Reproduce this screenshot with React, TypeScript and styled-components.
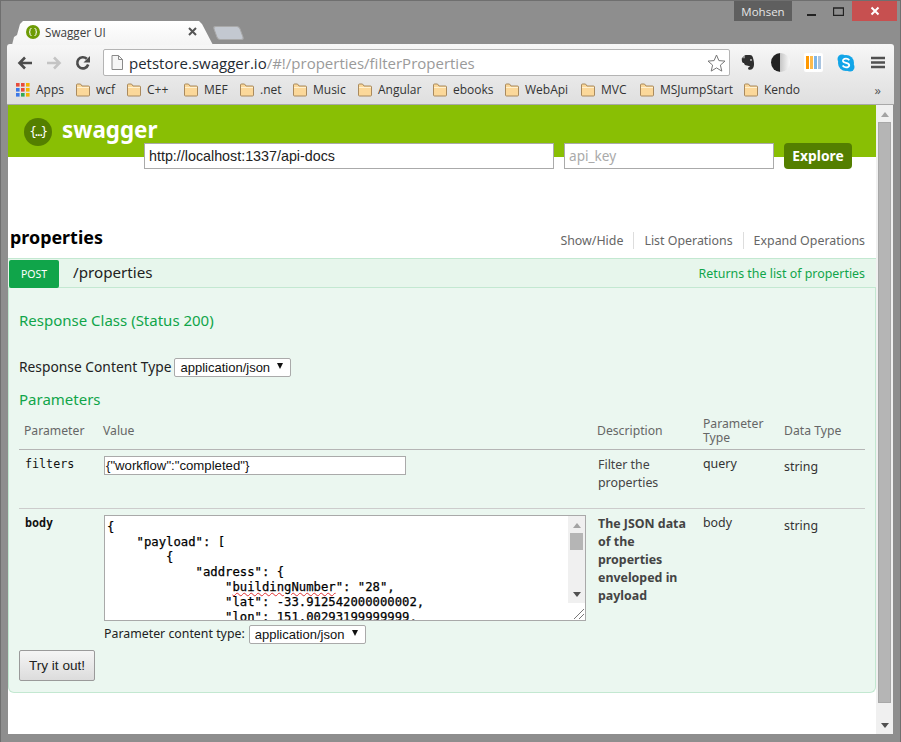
import React from 'react';
import styled, { createGlobalStyle } from 'styled-components';

const GlobalStyle = createGlobalStyle`
  html, body { margin: 0; padding: 0; overflow: hidden; background: #8f8f8f; }
  * { box-sizing: border-box; }
`;

const UI_FONT = `"Open Sans", "Noto Sans", sans-serif`;
const PAGE_FONT = `"Noto Sans", "Open Sans", sans-serif`;
const ARIAL = `"Liberation Sans", Arial, sans-serif`;
const MONO = `"DejaVu Sans Mono", "Liberation Mono", monospace`;

const Frame = styled.div`
  width: 901px;
  height: 742px;
  display: flex;
  flex-direction: column;
  background: #8e8e8e;
  border: 1px solid #6f6f6f;
  border-bottom: 0;
  overflow: hidden;
`;

const TitleBar = styled.div`
  height: 43px;
  flex: none;
  display: flex;
  justify-content: space-between;
  padding: 0 3px 0 6px;
`;

const TabStrip = styled.div`
  display: flex;
  align-items: flex-end;
  padding: 0 0 0 5px;
`;

const Tab = styled.div`
  position: relative;
  z-index: 1;
  width: 201px;
  height: 24px;
  margin-bottom: -1px;
  padding: 0 16px 3px 14px;
  display: flex;
  align-items: center;
  gap: 5px;
  background: linear-gradient(#ffffff, #f4f4f4);
  clip-path: polygon(0 100%, 2px 16px, 5px 14px, 8px 3px, 11px 0, 187px 0, 190px 3px, 201px 100%);
  font: 11.7px ${UI_FONT};
  color: #3d3d3d;
`;

const TabTitle = styled.span`
  flex: 1;
`;

const NewTab = styled.div`
  width: 27px;
  height: 14px;
  margin: 0 0 4px 2px;
  background: #c3c8d0;
  border: 1px solid #a9a9a9;
  border-radius: 3px;
  transform: skewX(20deg);
`;

const WindowArea = styled.div`
  display: flex;
  align-items: flex-start;
`;

const Profile = styled.div`
  width: 58px;
  height: 20px;
  margin-right: 6px;
  background: #5f5f5f;
  color: #e6e6e6;
  font: 11.5px/21px ${UI_FONT};
  text-align: center;
`;

const WinButton = styled.div<{ $close?: boolean }>`
  width: ${p => (p.$close ? '45px' : '27px')};
  height: 20px;
  display: flex;
  align-items: center;
  justify-content: center;
  background: ${p => (p.$close ? '#c75050' : 'transparent')};
`;

const Chrome = styled.div`
  flex: none;
  margin: 0 6px;
  background: linear-gradient(#f7f7f7, #e8e8e8 58%, #dfdfdf);
  border-radius: 3px 3px 0 0;
  border-bottom: 1px solid #a8a8a8;
`;

const Toolbar = styled.div`
  height: 33px;
  display: flex;
  align-items: center;
  padding: 4px 0 0 10px;
`;

const NavIcon = styled.div`
  width: 29px;
  height: 20px;
  flex: none;
  display: flex;
  align-items: center;
`;

const Omnibox = styled.div`
  flex: none;
  width: 627px;
  height: 27px;
  margin-left: -1px;
  display: flex;
  align-items: center;
  gap: 6px;
  padding: 0 3px 0 7px;
  background: #fff;
  border: 1px solid #b4b4b4;
  border-radius: 2px;
  font: 15px ${UI_FONT};
  color: #9a9a9a;
  white-space: nowrap;
`;

const Host = styled.span`
  color: #1f2b33;
`;

const UrlText = styled.div`
  flex: 1;
`;

const Extensions = styled.div`
  flex: 1;
  display: flex;
  align-items: center;
  padding-left: 2px;
`;

const ExtensionSlot = styled.div`
  width: 32.5px;
  flex: none;
  display: flex;
  justify-content: center;
`;

const BookmarkBar = styled.div`
  height: 27px;
  display: flex;
  align-items: center;
  padding: 0 0 2px 9px;
  font: 12px ${UI_FONT};
  color: #333;
  white-space: nowrap;
`;

const Bookmark = styled.div<{ $width: number; $gap: number }>`
  width: ${p => p.$width}px;
  flex: none;
  display: flex;
  align-items: center;
  gap: ${p => p.$gap}px;
`;

const More = styled.span`
  margin-left: auto;
  margin-right: 13px;
  font-size: 13px;
  color: #555;
`;

const Viewport = styled.div`
  height: 629px;
  flex: none;
  margin: 0 7px;
  display: flex;
  background: #fff;
`;

const Page = styled.div`
  width: 868px;
  flex: none;
  overflow: hidden;
  font-family: ${PAGE_FONT};
`;

const Scrollbar = styled.div`
  flex: 1;
  background: #f0f0f0;
  display: flex;
  flex-direction: column;
  align-items: center;
  justify-content: space-between;
  padding: 7px 0 6px;
`;

const ScrollThumb = styled.div`
  width: 13px;
  flex: 1;
  margin: 5px 0 20px;
  background: #b5b5b5;
  border: 1px solid #a8a8a8;
`;

const Arrow = styled.div<{ $up?: boolean }>`
  width: 0;
  height: 0;
  flex: none;
  border-left: 4px solid transparent;
  border-right: 4px solid transparent;
  ${p => (p.$up ? 'border-bottom: 5px solid #a3a3a3;' : 'border-top: 5px solid #505050;')}
`;

const Header = styled.div`
  height: 52px;
  padding: 13px 0 0 16px;
  display: flex;
  align-items: flex-start;
  gap: 10px;
  background: #89bf04;
`;

const LogoMark = styled.div`
  width: 28px;
  height: 28px;
  display: flex;
  align-items: center;
  justify-content: center;
  border-radius: 50%;
  background: #547f00;
  color: #fff;
  font: 12px ${MONO};
  letter-spacing: -1.5px;
`;

const LogoText = styled.div`
  margin-top: -3px;
  font: bold 22.4px/30px ${PAGE_FONT};
  color: #fff;
`;

const ApiForm = styled.div`
  margin: -14px 0 0 136px;
  height: 26px;
  display: flex;
  gap: 10px;
`;

const ApiInput = styled.div<{ $width: number; $placeholder?: boolean }>`
  width: ${p => p.$width}px;
  height: 26px;
  padding: 0 4px;
  background: #fff;
  border: 1px solid #aaa;
  font: ${p => (p.$placeholder ? '13.6px' : '14.3px')}/24px ${p => (p.$placeholder ? PAGE_FONT : ARIAL)};
  color: ${p => (p.$placeholder ? '#aaa' : '#222')};
`;

const ExploreButton = styled.div`
  width: 68px;
  height: 26px;
  background: #547f00;
  border-radius: 4px;
  color: #fff;
  text-align: center;
  font: bold 13.8px/26px ${PAGE_FONT};
`;

const Section = styled.div`
  margin-top: 55px;
`;

const SectionHead = styled.div`
  height: 34px;
  display: flex;
  align-items: flex-start;
  justify-content: space-between;
  padding: 0 11px 0 2px;
`;

const SectionTitle = styled.div`
  font: bold 17.9px/26px ${PAGE_FONT};
  color: #000;
`;

const Links = styled.div`
  display: flex;
  margin-top: 8px;
  font: 12.4px/17px ${PAGE_FONT};
  color: #666;
`;

const LinkItem = styled.div<{ $first?: boolean }>`
  padding: 0 10px 0 ${p => (p.$first ? '0' : '10px')};
  border-left: ${p => (p.$first ? '0' : '1px solid #ddd')};
  &:last-child { padding-right: 0; }
`;

const OperationHead = styled.div`
  height: 30px;
  display: flex;
  align-items: center;
  padding: 1px 11px 0 1px;
  background: #e7f6ec;
  border: 1px solid #c3e8d1;
  border-left: 0;
  border-right: 0;
`;

const Verb = styled.div`
  width: 50px;
  height: 28px;
  background: #10a54a;
  border-radius: 2px;
  color: #fff;
  font: 10.5px/29px ${PAGE_FONT};
  text-align: center;
`;

const Path = styled.div`
  margin: -3px 0 0 14px;
  flex: 1;
  font: 15.2px ${PAGE_FONT};
  color: #222;
`;

const Summary = styled.div`
  font: 12.4px ${PAGE_FONT};
  color: #10a54a;
`;

const OperationBody = styled.div`
  height: 405px;
  padding: 22px 10px 0 10px;
  background: #ebf7f0;
  border: 1px solid #c3e8d1;
  border-top: 0;
  border-radius: 0 0 6px 6px;
  display: flex;
  flex-direction: column;
`;

const GreenHeading = styled.div<{ $top?: number; $gap?: number }>`
  font: 15px/20px ${PAGE_FONT};
  color: #10a54a;
  margin-top: ${p => p.$top || 0}px;
  margin-bottom: ${p => p.$gap || 0}px;
`;

const ContentTypeRow = styled.div<{ $gap: number; $size: number }>`
  display: flex;
  align-items: center;
  gap: ${p => p.$gap}px;
  height: 18px;
  font: ${p => p.$size}px/18px ${PAGE_FONT};
  color: #222;
`;

const FakeSelect = styled.div<{ $width: number }>`
  width: ${p => p.$width}px;
  height: 19px;
  padding: 0 5px;
  display: flex;
  align-items: center;
  justify-content: space-between;
  background: #fff;
  border: 1px solid #aaa;
  border-radius: 2px;
  font: 13px ${ARIAL};
  color: #111;
`;

const SelectCaret = styled.span`
  width: 0;
  height: 0;
  margin-top: -2px;
  margin-right: 2px;
  border-left: 3.5px solid transparent;
  border-right: 3.5px solid transparent;
  border-top: 6px solid #111;
`;

const Grid = `
  display: grid;
  grid-template-columns: 79px 494px 106px 81px 1fr;
`;

const ParamHead = styled.div`
  ${Grid}
  height: 33px;
  margin-top: 8px;
  align-items: center;
  padding: 0 0 5px 5px;
  border-bottom: 1px solid #b5b5b5;
  font: 12.2px/14px ${PAGE_FONT};
  color: #666;
`;

const ParamRow = styled.div<{ $height: number; $border?: boolean }>`
  ${Grid}
  height: ${p => p.$height}px;
  padding-left: 5px;
  align-items: start;
  border-bottom: ${p => (p.$border ? '1px solid #ccc' : '0')};
`;

const ParamName = styled.div<{ $strong?: boolean }>`
  padding: 7px 0 0 1px;
  font: ${p => (p.$strong ? 'bold' : 'normal')} 11.7px/14px ${MONO};
  color: #111;
`;

const ValueCell = styled.div`
  padding: 6px 0 0 1px;
`;

const ValueInput = styled.div`
  width: 302px;
  height: 19px;
  padding-left: 1px;
  background: #fff;
  border: 1px solid #aaa;
  font: 13.2px/17px ${ARIAL};
  color: #111;
  white-space: nowrap;
`;

const Editor = styled.div`
  position: relative;
  width: 482px;
  height: 106px;
  background: #fff;
  border: 1px solid #a9a9a9;
  overflow: hidden;
`;

const EditorText = styled.pre`
  margin: 0;
  padding: 4px 0 0 2px;
  font: normal 12.25px/15px ${MONO};
  color: #000;
  -webkit-text-stroke: 0.25px #000;
`;

const Squiggle = styled.span`
  text-decoration: underline wavy #e03030 1px;
  text-underline-offset: 1px;
`;

const EditorScroll = styled.div`
  position: absolute;
  top: 0;
  right: 0;
  bottom: 17px;
  width: 17px;
  padding: 7px 0 6px;
  display: flex;
  flex-direction: column;
  align-items: center;
  justify-content: space-between;
  background: #f0f0f0;
`;

const EditorThumb = styled.div`
  position: absolute;
  top: 17px;
  left: 2px;
  width: 13px;
  height: 17px;
  background: #b5b5b5;
`;

const ResizeGrip = styled.svg`
  position: absolute;
  right: 0;
  bottom: 0;
`;

const EditorFooter = styled.div`
  margin-top: 4px;
`;

const Description = styled.div<{ $bold?: boolean }>`
  padding: 6px 15px 0 1px;
  font: ${p => (p.$bold ? 'bold' : 'normal')} 12.4px/18px ${PAGE_FONT};
  color: #444;
`;

const TypeCell = styled.div<{ $offset?: number }>`
  padding-top: ${p => p.$offset ?? 5}px;
  font: 12.4px/18px ${PAGE_FONT};
  color: #333;
`;

const TryButton = styled.div`
  width: 76px;
  height: 31px;
  margin-top: -9px;
  background: linear-gradient(#f5f5f5, #dcdcdc);
  border: 1px solid #9a9a9a;
  border-radius: 2px;
  text-align: center;
  font: 13.6px/29px ${ARIAL};
  color: #222;
`;

const Folder = () => (
  <svg width="16" height="14" viewBox="0 0 16 14">
    <path d="M1.5 3V2q0-1 1-1h3l1.5 2h6.500q1 0 1 1v8q0 1-1 1h-11q-1 0-1-1z" fill="#fbd89a" stroke="#a98a5e" />
    <path d="M2 4.500h12" stroke="#fff1d0" />
  </svg>
);

const AppsIcon = () => (
  <svg width="14" height="14" viewBox="0 0 14 14">
    {['#e74c3c', '#e74c3c', '#f4b400', '#3b78e7', '#e74c3c', '#f4b400', '#3b78e7', '#34a853', '#f4b400'].map((c, i) => (
      <rect key={i} x={(i % 3) * 5} y={Math.floor(i / 3) * 5} width="3.6" height="3.6" fill={c} />
    ))}
  </svg>
);

const bookmarks: Array<[string, number]> = [
  ['wcf', 51],
  ['C++', 57],
  ['MEF', 56],
  ['.net', 53],
  ['Music', 65],
  ['Angular', 75],
  ['ebooks', 72],
  ['WebApi', 76],
  ['MVC', 59],
  ['MSJumpStart', 104],
  ['Kendo', 70]
];

const jsonSample = `{
    "payload": [
        {
            "address": {
                "`;

export default function App() {
  return (
    <>
      <GlobalStyle />
      <Frame>
        <TitleBar>
          <TabStrip>
            <Tab>
              <svg width="14" height="14" viewBox="0 0 14 14">
                <circle cx="7" cy="7" r="7" fill="#6d9b05" />
                <path d="M5.5 3.5q-1.5 0-1.5 1.2v1.4q0 .9-1 .9 1 0 1 .9v1.4q0 1.2 1.5 1.2M8.500 3.500q1.500 0 1.500 1.200v1.400q0 .9 1 .9-1 0-1 .9v1.400q0 1.200-1.500 1.200" fill="none" stroke="#fff" />
              </svg>
              <TabTitle>Swagger UI</TabTitle>
              <svg width="9" height="9" viewBox="0 0 9 9">
                <path d="M1 1l7 7M8 1l-7 7" stroke="#555" strokeWidth="2" />
              </svg>
            </Tab>
            <NewTab />
          </TabStrip>
          <WindowArea>
            <Profile>Mohsen</Profile>
            <WinButton>
              <svg width="9" height="10" viewBox="0 0 9 10"><rect y="8" width="9" height="2" fill="#222" /></svg>
            </WinButton>
            <WinButton>
              <svg width="11" height="9" viewBox="0 0 11 9"><path d="M.5 1h10v7.500H.5z" fill="none" stroke="#222" strokeWidth="1.3" /></svg>
            </WinButton>
            <WinButton $close>
              <svg width="10" height="10" viewBox="0 0 10 10"><path d="M1.500 1.500l7 7M8.500 1.500l-7 7" stroke="#fff" strokeWidth="2" /></svg>
            </WinButton>
          </WindowArea>
        </TitleBar>
        <Chrome>
          <Toolbar>
            <NavIcon>
              <svg width="16" height="14" viewBox="0 0 16 14"><path d="M15 7H3M8 1.500L2.500 7 8 12.500" fill="none" stroke="#4c4c4c" strokeWidth="2.6" /></svg>
            </NavIcon>
            <NavIcon>
              <svg width="16" height="14" viewBox="0 0 16 14"><path d="M1 7h12M8 1.500L13.500 7 8 12.500" fill="none" stroke="#c4c4c4" strokeWidth="2.6" /></svg>
            </NavIcon>
            <NavIcon>
              <svg width="16" height="16" viewBox="0 0 16 16"><path d="M13.200 9.500A5.600 5.600 0 1 1 11.800 3.800" fill="none" stroke="#4c4c4c" strokeWidth="2.6" /><path d="M15 1v6.500H8.500z" fill="#4c4c4c" /></svg>
            </NavIcon>
            <Omnibox>
              <svg width="12" height="15" viewBox="0 0 12 15"><path d="M1 .5h6.500l4 4v10H1z" fill="#f6f6f6" stroke="#8a8a8a" /><path d="M7.500.5v4h4" fill="none" stroke="#8a8a8a" /></svg>
              <UrlText><Host>petstore.swagger.io</Host>/#!/properties/filterProperties</UrlText>
              <svg width="19" height="18" viewBox="0 0 19 18"><path d="M9.500 1l2.400 5.600 6.100.5-4.600 4 1.400 6-5.300-3.200-5.300 3.200 1.400-6-4.600-4 6.100-.5z" fill="#fff" stroke="#777" /></svg>
            </Omnibox>
            <Extensions>
              <ExtensionSlot>
                <svg width="15" height="17" viewBox="0 0 15 17">
                  <path d="M4.500 1H9c1.500 0 2.300.7 2.700 2 .9 2.800 1.500 5.400 1.300 8-.2 2.800-1.800 4.800-4.200 4.800-1.300 0-1.900-.9-1.700-1.800.2-.8 1-1.100 1.900-.9-.5-1-1.800-1.300-3.100-1.500C4 11.300 3.300 10.300 3 9H2C1 8.300.8 7 .8 5.500V4.200z" fill="#2f2f2f" />
                  <path d="M4 1v3.200H.9z" fill="#8a8a8a" />
                  <circle cx="10" cy="6" r=".9" fill="#cfcfcf" />
                </svg>
              </ExtensionSlot>
              <ExtensionSlot>
                <svg width="19" height="19" viewBox="0 0 19 19">
                  <defs>
                    <linearGradient id="half">
                      <stop offset="0.5" stopColor="#222" />
                      <stop offset="0.5" stopColor="#c8c8c8" />
                      <stop offset="1" stopColor="#fafafa" />
                    </linearGradient>
                  </defs>
                  <circle cx="9.500" cy="9.500" r="9.500" fill="url(#half)" />
                </svg>
              </ExtensionSlot>
              <ExtensionSlot>
                <svg width="19" height="19" viewBox="0 0 19 19">
                  <rect width="19" height="19" rx="2" fill="#fff" />
                  <rect x="2" y="3" width="3" height="13" fill="#ff9800" />
                  <rect x="6" y="3" width="3" height="13" fill="#fdbb4d" />
                  <rect x="10" y="3" width="3" height="13" fill="#7eb6e6" />
                  <rect x="14" y="3" width="3" height="13" fill="#a9c4e0" />
                </svg>
              </ExtensionSlot>
              <ExtensionSlot>
                <svg width="18" height="18" viewBox="0 0 18 18">
                  <circle cx="5" cy="5" r="4.500" fill="#12a5e8" />
                  <circle cx="13" cy="13" r="4.500" fill="#12a5e8" />
                  <circle cx="9" cy="9" r="8" fill="#12a5e8" />
                  <path d="M12.300 6.200Q11 4.600 8.800 4.700 5.800 4.900 6 6.900 6.200 8.300 9 8.900 12.300 9.600 12.200 11.300 12 13.300 9 13.300 6.700 13.300 5.600 11.600" fill="none" stroke="#fff" strokeWidth="1.800" />
                </svg>
              </ExtensionSlot>
              <ExtensionSlot>
                <svg width="14" height="13" viewBox="0 0 14 13"><path d="M0 2h14M0 6.500h14M0 11h14" stroke="#505050" strokeWidth="2.400" /></svg>
              </ExtensionSlot>
            </Extensions>
          </Toolbar>
          <BookmarkBar>
            <Bookmark $width={59} $gap={6}><AppsIcon />Apps</Bookmark>
            {bookmarks.map(([label, width]) => (
              <Bookmark key={label} $width={width} $gap={5}><Folder />{label}</Bookmark>
            ))}
            <More>»</More>
          </BookmarkBar>
        </Chrome>
        <Viewport>
          <Page>
            <Header>
              <LogoMark>{'{…}'}</LogoMark>
              <LogoText>swagger</LogoText>
            </Header>
            <ApiForm>
              <ApiInput $width={410}>http://localhost:1337/api-docs</ApiInput>
              <ApiInput $width={210} $placeholder>api_key</ApiInput>
              <ExploreButton>Explore</ExploreButton>
            </ApiForm>
            <Section>
              <SectionHead>
                <SectionTitle>properties</SectionTitle>
                <Links>
                  <LinkItem $first>Show/Hide</LinkItem>
                  <LinkItem>List Operations</LinkItem>
                  <LinkItem>Expand Operations</LinkItem>
                </Links>
              </SectionHead>
              <OperationHead>
                <Verb>POST</Verb>
                <Path>/properties</Path>
                <Summary>Returns the list of properties</Summary>
              </OperationHead>
              <OperationBody>
                <GreenHeading $gap={28}>Response Class (Status 200)</GreenHeading>
                <ContentTypeRow $gap={3} $size={13.8}>
                  Response Content Type
                  <FakeSelect $width={117}>application/json<SelectCaret /></FakeSelect>
                </ContentTypeRow>
                <GreenHeading $top={13}>Parameters</GreenHeading>
                <ParamHead>
                  <span>Parameter</span>
                  <span>Value</span>
                  <span>Description</span>
                  <span>Parameter<br />Type</span>
                  <span>Data Type</span>
                </ParamHead>
                <ParamRow $height={59} $border>
                  <ParamName>filters</ParamName>
                  <ValueCell><ValueInput>{'{"workflow":"completed"}'}</ValueInput></ValueCell>
                  <Description>Filter the<br />properties</Description>
                  <TypeCell>query</TypeCell>
                  <TypeCell $offset={8}>string</TypeCell>
                </ParamRow>
                <ParamRow $height={150}>
                  <ParamName $strong>body</ParamName>
                  <ValueCell>
                    <Editor>
                      <EditorText>
                        {jsonSample}<Squiggle>buildingNumber</Squiggle>{'": "28",\n                "lat": -33.912542000000002,\n                "lon": 151.00293199999999,'}
                      </EditorText>
                      <EditorScroll>
                        <Arrow $up />
                        <EditorThumb />
                        <Arrow />
                      </EditorScroll>
                      <ResizeGrip width="16" height="16" viewBox="0 0 16 16">
                        <path d="M5 15L15 5M10 15l5-5" stroke="#777" />
                      </ResizeGrip>
                    </Editor>
                    <EditorFooter>
                      <ContentTypeRow $gap={4} $size={12.35}>
                        Parameter content type:
                        <FakeSelect $width={117}>application/json<SelectCaret /></FakeSelect>
                      </ContentTypeRow>
                    </EditorFooter>
                  </ValueCell>
                  <Description $bold>The JSON data of the properties enveloped in payload</Description>
                  <TypeCell>body</TypeCell>
                  <TypeCell $offset={8}>string</TypeCell>
                </ParamRow>
                <TryButton>Try it out!</TryButton>
              </OperationBody>
            </Section>
          </Page>
          <Scrollbar>
            <Arrow $up />
            <ScrollThumb />
            <Arrow />
          </Scrollbar>
        </Viewport>
      </Frame>
    </>
  );
}
